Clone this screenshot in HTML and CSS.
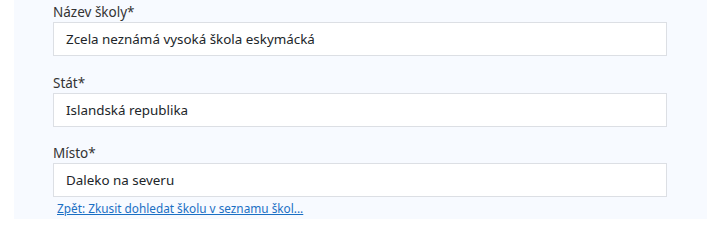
FILE: index.html
```html
<!DOCTYPE html>
<html lang="cs">
<head>
<meta charset="utf-8">
<title>Škola</title>
<link rel="stylesheet" href="styles.css">
</head>
<body>
<div class="panel">
  <div class="field">
    <label class="label">Název školy*</label>
    <div class="input">Zcela neznámá vysoká škola eskymácká</div>
  </div>
  <div class="field">
    <label class="label">Stát*</label>
    <div class="input">Islandská republika</div>
  </div>
  <div class="field">
    <label class="label">Místo*</label>
    <div class="input">Daleko na severu</div>
  </div>
  <a class="back" href="#">Zpět: Zkusit dohledat školu v seznamu škol...</a>
</div>
</body>
</html>
```
FILE: styles.css
```css
html, body {
  margin: 0;
  padding: 0;
  background: #ffffff;
}
body {
  font-family: "Noto Sans", "Open Sans", sans-serif;
}
.panel {
  margin-left: 14px;
  width: 693px;
  height: 219px;
  overflow: hidden;
  box-sizing: border-box;
  background: #f7faff;
  padding: 2px 40px 0 39px;
  display: flex;
  flex-direction: column;
}
.field {
  display: flex;
  flex-direction: column;
  flex-shrink: 0;
  margin-bottom: 16.5px;
}
.label {
  font-size: 13.5px;
  line-height: 20px;
  color: #333333;
}
.input {
  height: 34px;
  box-sizing: border-box;
  border: 1px solid #dcdfe4;
  background: #ffffff;
  padding: 0 12px;
  display: flex;
  align-items: center;
  font-size: 13.4px;
  color: #212529;
}
.back {
  margin-top: -16.5px;
  padding: 3px 0 0 4px;
  font-size: 11.8px;
  line-height: 16px;
  color: #1a6fc4;
  text-decoration: underline;
  align-self: flex-start;
  flex-shrink: 0;
}
```
